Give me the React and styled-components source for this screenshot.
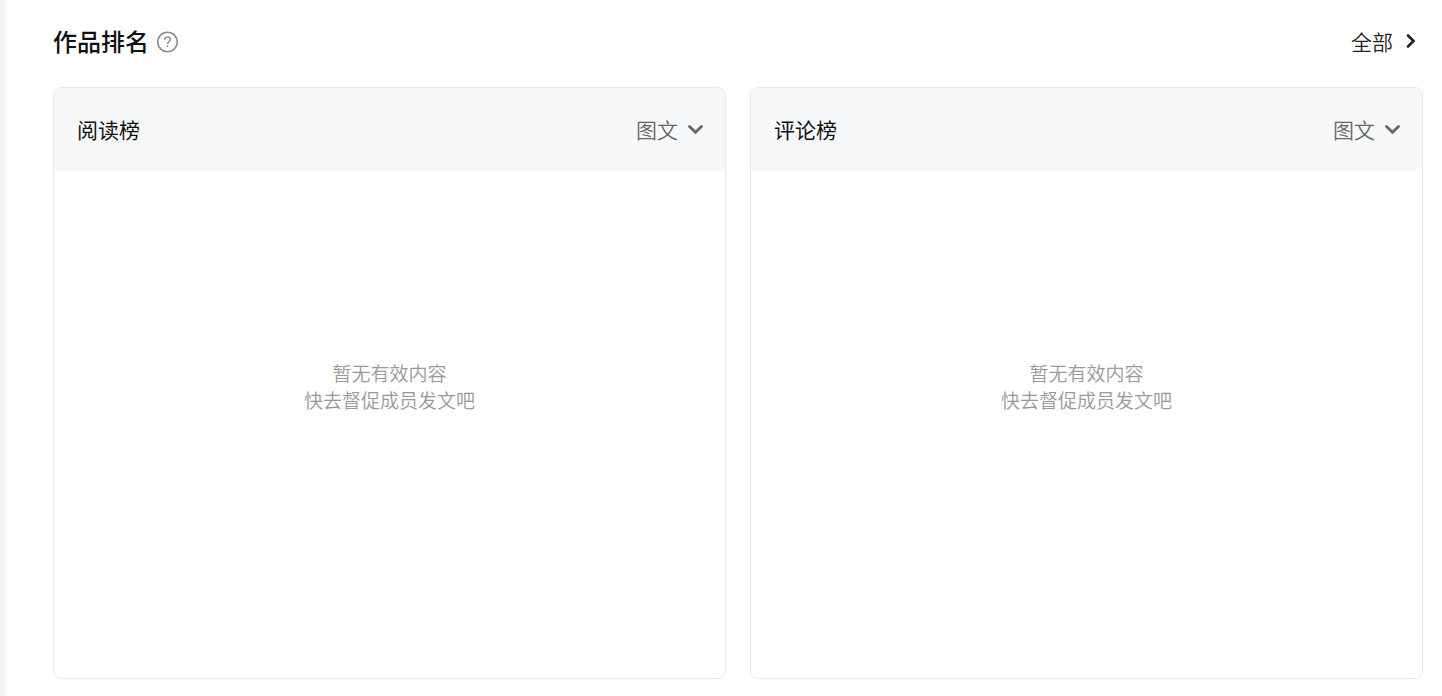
import React, {useState} from 'react'
import styled, {createGlobalStyle} from 'styled-components'

const GlobalStyle = createGlobalStyle`
* {
    box-sizing: border-box;
}
body {
    margin: 0;
    background-color: #fff;
    color: #111;
    font-family: "Noto Sans CJK SC", sans-serif;
}
`
const Page = styled.main`
min-height: 100vh;
border-left: 6px solid #f4f6f7;
padding: 23px 19px 16px 47px;
`
const TopBar = styled.header`
display: flex;
align-items: center;
justify-content: space-between;
height: 36px;
margin-bottom: 28px;
`
const TitleGroup = styled.div`
display: flex;
align-items: center;
gap: 6px;
`
const Title = styled.h1`
margin: 0;
font-size: 24px;
font-weight: 500;
line-height: 36px;
`
const HelpButton = styled.button`
display: flex;
padding: 0;
border: none;
background: none;
color: #8c8c8c;
cursor: pointer;
`
const AllLink = styled.a`
display: flex;
align-items: center;
gap: 12px;
padding-right: 6px;
color: #222;
font-size: 21px;
font-weight: 350;
line-height: 36px;
text-decoration: none;
`
const Boards = styled.div`
display: grid;
grid-template-columns: 1fr 1fr;
gap: 24px;
`
const Board = styled.section`
border: 1px solid #e8eaf1;
border-radius: 8px;
overflow: hidden;
`
const BoardHeader = styled.div`
display: flex;
align-items: center;
justify-content: space-between;
height: 82px;
padding: 0 21px 0 23px;
background-color: #f7f8fa;
`
const BoardTitle = styled.h2`
margin: 0;
font-size: 21px;
font-weight: 400;
line-height: 32px;
`
const SelectBox = styled.label`
display: flex;
align-items: center;
gap: 8px;
color: #666;
`
const TypeSelect = styled.select`
appearance: none;
padding: 0;
border: none;
background: none;
color: #666;
font-family: inherit;
font-size: 21px;
font-weight: 350;
line-height: 32px;
cursor: pointer;
`
const Empty = styled.div`
display: flex;
flex-direction: column;
align-items: center;
min-height: 508px;
padding-top: 189px;
color: #999;
font-size: 19px;
font-weight: 350;
line-height: 27px;
`
const EmptyLine = styled.p`
margin: 0;
`

const HelpIcon = () => (
    <svg width="24" height="24" viewBox="0 0 24 24" fill="none" stroke="currentColor" aria-hidden="true">
        <circle cx="12.5" cy="13" r="9.8" strokeWidth="1.6" />
        <path d="M9.7 10.7c0-1.7 1.2-2.8 2.8-2.8s2.8 1.1 2.8 2.6c0 2-2.7 2.3-2.7 4.4" strokeWidth="1.4" />
        <circle cx="12.6" cy="17.2" r="0.9" fill="currentColor" stroke="none" />
    </svg>
)

const ArrowRight = () => (
    <svg width="12" height="16" viewBox="0 0 12 16" fill="none" stroke="currentColor" strokeWidth="2.6" strokeLinecap="round" aria-hidden="true">
        <path d="M3 2.5L8.5 8L3 13.5" />
    </svg>
)

const ArrowDown = () => (
    <svg width="18" height="12" viewBox="0 0 18 12" fill="none" stroke="currentColor" strokeWidth="2.8" strokeLinecap="round" aria-hidden="true">
        <path d="M3.5 3.5L9.5 9.2L15.5 3.5" />
    </svg>
)

function RankBoard(props){
    const [type, setType] = useState('article')

    return(
        <Board>
            <BoardHeader>
                <BoardTitle>{props.title}</BoardTitle>
                <SelectBox>
                    <TypeSelect
                        aria-label={props.title}
                        value={type}
                        onChange={e => setType(e.target.value)}
                    >
                        <option value="article">图文</option>
                        <option value="video">视频</option>
                    </TypeSelect>
                    <ArrowDown />
                </SelectBox>
            </BoardHeader>
            <Empty>
                <EmptyLine>暂无有效内容</EmptyLine>
                <EmptyLine>快去督促成员发文吧</EmptyLine>
            </Empty>
        </Board>
    )
}

export default function App(){
    return(
        <Page>
            <GlobalStyle />
            <TopBar>
                <TitleGroup>
                    <Title>作品排名</Title>
                    <HelpButton type="button" aria-label="说明">
                        <HelpIcon />
                    </HelpButton>
                </TitleGroup>
                <AllLink href="#all">
                    全部
                    <ArrowRight />
                </AllLink>
            </TopBar>
            <Boards>
                <RankBoard title="阅读榜" />
                <RankBoard title="评论榜" />
            </Boards>
        </Page>
    )
}
